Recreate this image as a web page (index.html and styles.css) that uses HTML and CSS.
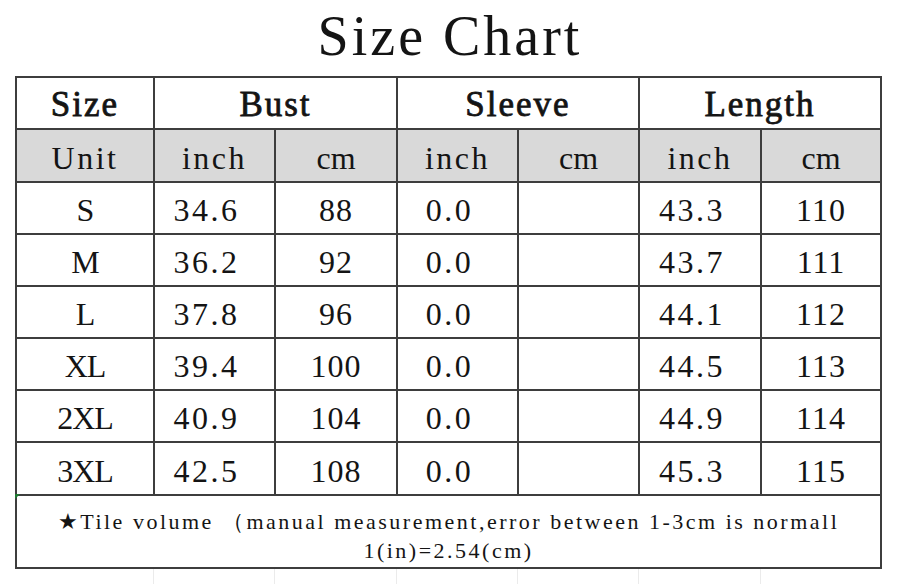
FILE: index.html
```html
<!DOCTYPE html>
<html lang="en">
<head>
<meta charset="utf-8">
<title>Size Chart</title>
<link rel="stylesheet" href="styles.css">
</head>
<body>
<div class="page">
  <h1 class="title">Size Chart</h1>
  <div class="chart">
    <div class="cell head">Size</div>
    <div class="cell head span2">Bust</div>
    <div class="cell head span2">Sleeve</div>
    <div class="cell head span2">Length</div>

    <div class="cell unit">Unit</div>
    <div class="cell unit">inch</div>
    <div class="cell unit cm">cm</div>
    <div class="cell unit">inch</div>
    <div class="cell unit cm">cm</div>
    <div class="cell unit">inch</div>
    <div class="cell unit cm">cm</div>

    <div class="cell size">S</div><div class="cell num dec">34.6</div><div class="cell num">88</div><div class="cell num dec">0.0</div><div class="cell num"></div><div class="cell num dec">43.3</div><div class="cell num">110</div>
    <div class="cell size">M</div><div class="cell num dec">36.2</div><div class="cell num">92</div><div class="cell num dec">0.0</div><div class="cell num"></div><div class="cell num dec">43.7</div><div class="cell num">111</div>
    <div class="cell size">L</div><div class="cell num dec">37.8</div><div class="cell num">96</div><div class="cell num dec">0.0</div><div class="cell num"></div><div class="cell num dec">44.1</div><div class="cell num">112</div>
    <div class="cell size">XL</div><div class="cell num dec">39.4</div><div class="cell num">100</div><div class="cell num dec">0.0</div><div class="cell num"></div><div class="cell num dec">44.5</div><div class="cell num">113</div>
    <div class="cell size">2XL</div><div class="cell num dec">40.9</div><div class="cell num">104</div><div class="cell num dec">0.0</div><div class="cell num"></div><div class="cell num dec">44.9</div><div class="cell num">114</div>
    <div class="cell size">3XL</div><div class="cell num dec">42.5</div><div class="cell num">108</div><div class="cell num dec">0.0</div><div class="cell num"></div><div class="cell num dec">45.3</div><div class="cell num">115</div>

    <div class="cell note"><p class="note-text">★Tile volume （manual measurement,error between 1-3cm is normall<br>1(in)=2.54(cm)</p></div>
  </div>
  <div class="ghost">
    <span></span><span></span><span></span><span></span><span></span><span></span><span></span>
  </div>
</div>
</body>
</html>
```
FILE: styles.css
```css
html, body {
  margin: 0;
  padding: 0;
  background: #ffffff;
}

.page {
  width: 900px;
  height: 584px;
  overflow: hidden;
  font-family: "Liberation Serif", "Times New Roman", serif;
  color: #141414;
}

.title {
  margin: 0;
  height: 76px;
  box-sizing: border-box;
  padding-top: 5px;
  font-size: 56px;
  line-height: 62px;
  font-weight: normal;
  letter-spacing: 3px;
  text-align: center;
}

.chart {
  margin-left: 15px;
  width: fit-content;
  display: grid;
  grid-template-columns: 136px 119px 120px 119px 119px 120px 118px;
  grid-template-rows: 50px 51px 50px 50px 50px 50px 50px 51px 71px;
  gap: 2px;
  padding: 2px;
  background: #3d3d3d;
}

.cell {
  background: #ffffff;
  display: flex;
  align-items: center;
  justify-content: center;
  box-sizing: border-box;
  padding-top: 5px;
  font-size: 32px;
  letter-spacing: 1px;
  white-space: nowrap;
  position: relative;
}

.span2 {
  grid-column: span 2;
}

.head {
  font-weight: normal;
  -webkit-text-stroke: 0.8px #141414;
  font-size: 35px;
  letter-spacing: 2px;
  padding-top: 4px;
}

.unit {
  background: #d9d9d9;
  letter-spacing: 2.5px;
}

.unit.cm {
  letter-spacing: 0;
}

.size {
  letter-spacing: -1px;
}

.num.dec {
  padding-right: 16px;
  letter-spacing: 2.5px;
}

.note {
  grid-column: 1 / -1;
  padding-top: 9px;
}

.note::before {
  content: "";
  position: absolute;
  left: -2px;
  top: -2px;
  border-top: 5px solid #1f7a33;
  border-right: 5px solid transparent;
}

.note-text {
  margin: 0;
  font-size: 22px;
  line-height: 29px;
  letter-spacing: 2.5px;
  text-align: center;
  white-space: nowrap;
}

.ghost {
  margin-left: 17px;
  display: grid;
  grid-template-columns: 136px 119px 120px 119px 119px 120px 118px;
  column-gap: 2px;
  height: 20px;
}

.ghost span + span {
  border-left: 1px solid #ebebeb;
  margin-left: -2px;
}
```
